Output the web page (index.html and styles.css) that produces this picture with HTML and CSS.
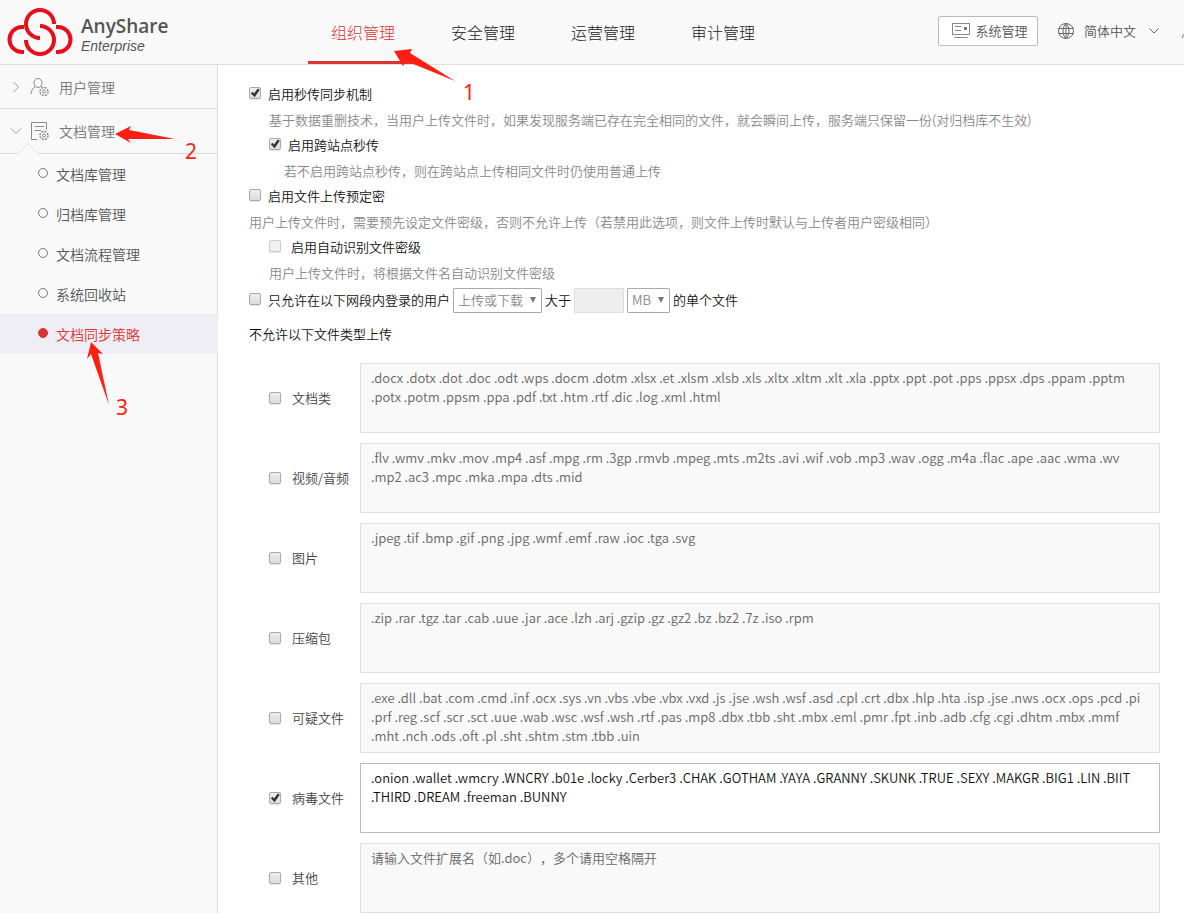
FILE: index.html
```html
<!DOCTYPE html>
<html lang="zh-CN">
<head>
<meta charset="utf-8">
<title>AnyShare Enterprise</title>
<link rel="stylesheet" href="styles.css">
</head>
<body>

<header class="header">
<a href="#" class="brand">
<svg class="logo" width="66" height="50" viewBox="7 7 66 50" fill="none" stroke="#e60f1c" stroke-width="4">
<path d="M54 24A14 14 0 1 0 40 38"/>
<path d="M40 26A14 14 0 1 1 26 40"/>
<path d="M24 27H22A12.500 12.500 0 0 0 22 52H24"/>
<path d="M56 27H58A12.500 12.500 0 0 1 58 52H56"/>
</svg>
<span class="brand-text">
<strong>AnyShare</strong>
<em>Enterprise</em>
</span>
</a>
<nav class="nav">
<a href="#" class="active">组织管理</a>
<a href="#">安全管理</a>
<a href="#">运营管理</a>
<a href="#">审计管理</a>
</nav>
<div class="tools">
<button type="button" class="system">
<svg width="18" height="16" viewBox="0 0 18 16" fill="none" stroke="#888">
<rect x="0.500" y="0.500" width="17" height="11"/>
<path d="M3 3.500H9M3 7.500H9M2.500 14.500H15.500"/>
<path d="M12 4H15V7H12Z" fill="#777" stroke="none"/>
</svg>
系统管理
</button>
<button type="button" class="lang">
<svg width="16" height="16" viewBox="0 0 16 16" fill="none" stroke="#666">
<circle cx="8" cy="8" r="7.500"/>
<path d="M0.500 5.500H15.500M0.500 10.500H15.500M8 0.500V15.500M8 0.500C4 4 4 12 8 15.500M8 0.500C12 4 12 12 8 15.500"/>
</svg>
<span>简体中文</span>
<svg width="10" height="6" viewBox="0 0 10 6" fill="none" stroke="#666"><path d="M0.500 0.500L5 5L9.500 0.500"/></svg>
</button>
<a href="#" class="account" aria-label="账户">
<svg width="16" height="16" viewBox="0 0 16 16" fill="none" stroke="#666"><circle cx="8" cy="4.500" r="4"/><path d="M0.500 15C0.500 11 4 9 8 9S15.500 11 15.500 15"/></svg>
</a>
</div>
</header>

<div class="page">
<aside class="sidebar">
<a href="#" class="group">
<svg class="arrow" width="12" height="12" viewBox="0 0 12 12" fill="none" stroke="#999"><path d="M3.500 1L8.500 6L3.500 11"/></svg>
<svg width="20" height="20" viewBox="0 0 20 20" fill="none" stroke="#8a8a8a">
<ellipse cx="8" cy="6" rx="4" ry="4.500"/>
<path d="M5.500 9.500C2.500 11 1.500 13.500 1 17M10.500 9.500L12 10.500"/>
<circle cx="14" cy="14.500" r="1.500"/>
<circle cx="14" cy="14.500" r="4" stroke-width="1.500" stroke-dasharray="2 1.140"/>
</svg>
<span>用户管理</span>
</a>
<a href="#" class="group open">
<svg class="arrow" width="12" height="12" viewBox="0 0 12 12" fill="none" stroke="#999"><path d="M1 3.500L6 8.500L11 3.500"/></svg>
<svg width="20" height="20" viewBox="0 0 20 20" fill="none" stroke="#8a8a8a">
<path d="M7 18.500H1.500V1.500H16.500V9M4.500 5.500H14M4.500 9.500H11"/>
<circle cx="14" cy="14.500" r="1.500"/>
<circle cx="14" cy="14.500" r="4" stroke-width="1.500" stroke-dasharray="2 1.140"/>
</svg>
<span>文档管理</span>
<svg class="notch" width="20" height="11" viewBox="0 0 20 11"><path d="M0 10.500L10 0.500L20 10.500" fill="#f9f9f9" stroke="#e2e2e2"/><path d="M1 10.500H19" stroke="#f9f9f9"/></svg>
</a>
<ul class="menu">
<li><a href="#">文档库管理</a></li>
<li><a href="#">归档库管理</a></li>
<li><a href="#">文档流程管理</a></li>
<li><a href="#">系统回收站</a></li>
<li><a href="#" class="selected">文档同步策略</a></li>
</ul>
</aside>

<main class="content">
<form>
<div class="row"><input type="checkbox" id="fast" checked><label for="fast">启用秒传同步机制</label></div>
<p class="hint indent">基于数据重删技术，当用户上传文件时，如果发现服务端已存在完全相同的文件，就会瞬间上传，服务端只保留一份(对归档库不生效)</p>
<div class="row indent"><input type="checkbox" id="cross" checked><label for="cross">启用跨站点秒传</label></div>
<p class="hint indent-more">若不启用跨站点秒传，则在跨站点上传相同文件时仍使用普通上传</p>
<div class="row"><input type="checkbox" id="level"><label for="level">启用文件上传预定密</label></div>
<p class="hint">用户上传文件时，需要预先设定文件密级，否则不允许上传（若禁用此选项，则文件上传时默认与上传者用户密级相同）</p>
<div class="row indent wide"><input type="checkbox" id="auto" disabled><label for="auto">启用自动识别文件密级</label></div>
<p class="hint indent">用户上传文件时，将根据文件名自动识别文件密级</p>
<div class="row limit">
<input type="checkbox" id="limit"><label for="limit">只允许在以下网段内登录的用户</label>
<span class="select direction"><select aria-label="操作" disabled><option>上传或下载</option></select></span>
<label for="size">大于</label>
<input type="text" id="size" class="size" disabled>
<span class="select unit"><select aria-label="单位" disabled><option>MB</option></select></span>
<span>的单个文件</span>
</div>

<h2>不允许以下文件类型上传</h2>

<div class="types">
<div class="type">
<input type="checkbox" id="t1"><label for="t1">文档类</label>
<textarea aria-label="文档类" disabled>.docx .dotx .dot .doc .odt .wps .docm .dotm .xlsx .et .xlsm .xlsb .xls .xltx .xltm .xlt .xla .pptx .ppt .pot .pps .ppsx .dps .ppam .pptm .potx .potm .ppsm .ppa .pdf .txt .htm .rtf .dic .log .xml .html</textarea>
</div>
<div class="type">
<input type="checkbox" id="t2"><label for="t2">视频/音频</label>
<textarea aria-label="视频/音频" disabled>.flv .wmv .mkv .mov .mp4 .asf .mpg .rm .3gp .rmvb .mpeg .mts .m2ts .avi .wif .vob .mp3 .wav .ogg .m4a .flac .ape .aac .wma .wv .mp2 .ac3 .mpc .mka .mpa .dts .mid</textarea>
</div>
<div class="type">
<input type="checkbox" id="t3"><label for="t3">图片</label>
<textarea aria-label="图片" disabled>.jpeg .tif .bmp .gif .png .jpg .wmf .emf .raw .ioc .tga .svg</textarea>
</div>
<div class="type">
<input type="checkbox" id="t4"><label for="t4">压缩包</label>
<textarea aria-label="压缩包" disabled>.zip .rar .tgz .tar .cab .uue .jar .ace .lzh .arj .gzip .gz .gz2 .bz .bz2 .7z .iso .rpm</textarea>
</div>
<div class="type">
<input type="checkbox" id="t5"><label for="t5">可疑文件</label>
<textarea aria-label="可疑文件" disabled>.exe .dll .bat .com .cmd .inf .ocx .sys .vn .vbs .vbe .vbx .vxd .js .jse .wsh .wsf .asd .cpl .crt .dbx .hlp .hta .isp .jse .nws .ocx .ops .pcd .pi .prf .reg .scf .scr .sct .uue .wab .wsc .wsf .wsh .rtf .pas .mp8 .dbx .tbb .sht .mbx .eml .pmr .fpt .inb .adb .cfg .cgi .dhtm .mbx .mmf .mht .nch .ods .oft .pl .sht .shtm .stm .tbb .uin</textarea>
</div>
<div class="type">
<input type="checkbox" id="t6" checked><label for="t6">病毒文件</label>
<textarea aria-label="病毒文件" spellcheck="false">.onion .wallet .wmcry .WNCRY .b01e .locky .Cerber3 .CHAK .GOTHAM .YAYA .GRANNY .SKUNK .TRUE .SEXY .MAKGR .BIG1 .LIN .BIIT .THIRD .DREAM .freeman .BUNNY</textarea>
</div>
<div class="type">
<input type="checkbox" id="t7"><label for="t7">其他</label>
<textarea aria-label="其他" placeholder="请输入文件扩展名（如.doc），多个请用空格隔开" disabled></textarea>
</div>
</div>
</form>
</main>
</div>

<!-- step marks laid over the page -->
<svg class="marks" width="480" height="420" viewBox="0 0 480 420" fill="#ff1f12">
<path d="M394 51L412 49L410 53L455 81L406 61L403 66Z"/>
<path d="M115 134L131 126L129 130L175 139L128 139L131 143Z"/>
<path d="M91 342L103 354L98 353L109 405L91 354L87 359Z"/>
<text x="463" y="100">1</text>
<text x="185" y="159">2</text>
<text x="116" y="415">3</text>
</svg>

</body>
</html>
```
FILE: styles.css
```css
* {
box-sizing: border-box;
}

body {
margin: 0;
min-height: 100vh;
display: flex;
flex-direction: column;
position: relative;
overflow-x: hidden;
background: #fff;
color: #111;
font-family: "Noto Sans CJK SC", sans-serif;
font-size: 13px;
font-weight: 350;
line-height: 20px;
text-spacing-trim: space-all;
}

a {
color: inherit;
text-decoration: none;
}

button, input, select, textarea {
font: inherit;
color: inherit;
text-spacing-trim: inherit;
}

/* header */

.header {
display: flex;
height: 65px;
background: #f9f9f9;
border-bottom: 1px solid #ddd;
overflow: hidden;
}

.brand {
display: flex;
flex: none;
width: 308px;
padding: 7px;
gap: 8px;
color: #555;
}

.brand-text {
padding-top: 7px;
}

.brand-text strong {
display: block;
font: 600 19px/24px "Open Sans", sans-serif;
}

.brand-text em {
display: block;
font: italic 14px/16px "Liberation Sans", sans-serif;
}

.nav {
display: flex;
gap: 10px;
}

.nav a {
width: 110px;
text-align: center;
font-size: 16px;
font-weight: 300;
line-height: 64px;
color: #222;
}

.nav .active {
color: #dc3535;
border-bottom: 3px solid #dc3535;
}

.tools {
display: flex;
align-items: center;
flex: none;
margin-left: auto;
margin-right: -14px;
padding-bottom: 2px;
color: #555;
}

.system {
display: flex;
align-items: center;
justify-content: center;
gap: 5px;
width: 100px;
height: 30px;
padding: 0 0 0 4px;
background: #fff;
border: 1px solid #bbb;
border-radius: 2px;
}

.lang {
display: flex;
align-items: center;
padding: 0;
margin: 0 23px 0 20px;
background: none;
border: 0;
}

.lang span {
margin: 0 13px 0 10px;
}

.account {
display: flex;
}

/* sidebar */

.page {
display: flex;
flex: 1;
}

.sidebar {
flex: none;
width: 218px;
background: #f9f9f9;
border-right: 1px solid #ddd;
font-size: 14px;
}

.group {
display: flex;
align-items: center;
position: relative;
height: 44px;
padding-left: 10px;
border-bottom: 1px solid #ddd;
color: #777;
}

.group.open {
height: 45px;
}

.group .arrow {
margin-right: 8px;
}

.group span {
margin-left: 9px;
}

.notch {
position: absolute;
left: 18px;
bottom: -1px;
}

.menu {
list-style: none;
margin: 0;
padding: 0;
}

.menu a {
display: flex;
align-items: center;
height: 40px;
padding-left: 38px;
color: #555;
}

.menu a:before {
content: "";
width: 8px;
height: 8px;
margin: 0 10px 2px 0;
margin-right: 8px;
border: 1px solid #777;
border-radius: 50%;
}

.menu .selected {
margin-right: -1px;
background: #efeef4;
color: #dc3535;
}

.menu .selected:before {
border-color: #dc3535;
background: #dc3535;
}

/* content */

.content {
flex: 1;
min-width: 0;
padding: 16px 24px 0 31px;
}

.row {
display: flex;
align-items: center;
height: 26px;
}

.row label {
margin-left: 7px;
}

.row.wide label {
margin-left: 10px;
}

.hint {
margin: 0;
line-height: 25px;
color: #888;
}

.indent {
margin-left: 20px;
}

.indent-more {
margin-left: 35px;
}

input[type="checkbox"] {
appearance: none;
flex: none;
width: 12px;
height: 12px;
margin: 0;
border: 1px solid #aaa;
border-radius: 2px;
background: linear-gradient(#eee, #dcdcdc);
box-shadow: 0 1px 1px #e4e4e4;
}

.row input[type="checkbox"] {
margin-bottom: 2px;
}

input[type="checkbox"]:checked:after {
content: "";
display: block;
width: 10px;
height: 10px;
background: #333;
clip-path: polygon(8% 52%, 26% 38%, 40% 55%, 78% 5%, 98% 18%, 46% 92%);
}

input[type="checkbox"]:disabled {
border-color: #ccc;
background: #f0f0f0;
}

.limit {
height: 30px;
}

.limit .select {
position: relative;
margin-left: 3px;
}

.limit .select + label,
.limit .select + span {
margin-left: 3px;
}

.select select {
appearance: none;
display: block;
width: 100%;
height: 25px;
padding: 0 4px;
border: 1px solid #aaa;
border-radius: 1px;
background: #fff;
color: #888;
opacity: 1;
}

.select:after {
content: "";
position: absolute;
right: 6px;
top: 9px;
border: 3px solid transparent;
border-top: 6px solid #777;
border-bottom: 0;
}

.direction {
width: 89px;
}

.limit .unit {
width: 43px;
}

.size {
width: 50px;
height: 25px;
margin-left: 3px;
padding: 0 4px;
border: 1px solid #ddd;
border-radius: 1px;
background: #eee;
}

h2 {
margin: 9px 0 19px;
font-size: 13px;
font-weight: inherit;
line-height: 20px;
}

.types {
display: grid;
gap: 10px;
margin-left: 20px;
}

.type {
display: grid;
grid-template-columns: 23px 68px 1fr;
align-items: center;
}

.type label {
color: #444;
}

textarea {
display: block;
width: 100%;
height: 70px;
padding: 4px 10px;
line-height: 19px;
border: 1px solid #bbb;
border-radius: 1px;
background: #fff;
resize: none;
}

textarea:disabled {
border-color: #ddd;
background: #f9f9f9;
color: #666;
}

textarea::placeholder {
color: #666;
}

.marks {
position: absolute;
left: 0;
top: 0;
pointer-events: none;
}

.marks text {
font: 400 21px "Noto Sans", sans-serif;
}
```
